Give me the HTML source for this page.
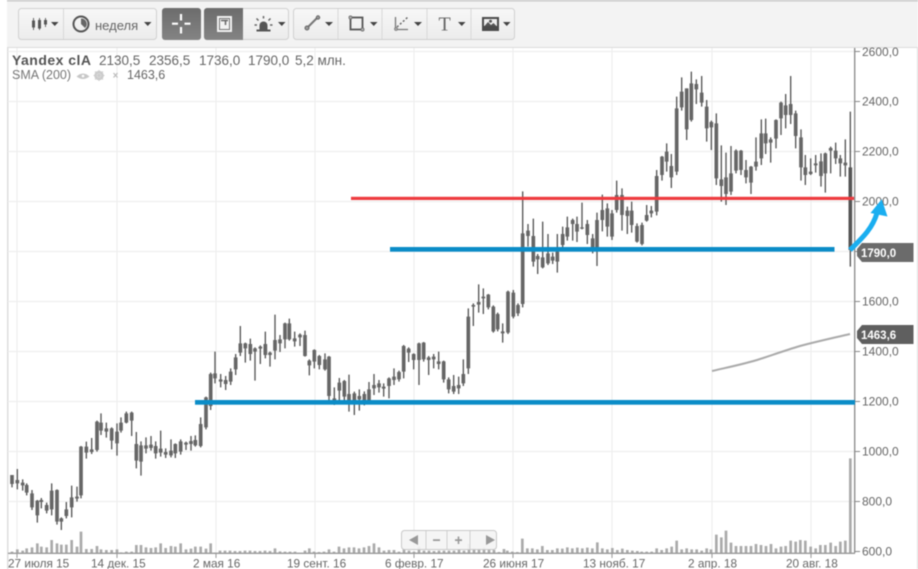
<!DOCTYPE html>
<html>
<head>
<meta charset="utf-8">
<style>
html,body{margin:0;padding:0;background:#fff;width:918px;height:569px;overflow:hidden}
svg{display:block;filter:blur(.45px)}
text{font-family:"Liberation Sans",Arial,sans-serif}
</style>
</head>
<body>
<svg width="918" height="569" viewBox="0 0 918 569" xmlns="http://www.w3.org/2000/svg">
<defs>
<linearGradient id="lg" x1="0" y1="0" x2="0" y2="1"><stop offset="0" stop-color="#f7f7f7"/><stop offset="1" stop-color="#ececec"/></linearGradient>
<linearGradient id="dg" x1="0" y1="0" x2="0" y2="1"><stop offset="0" stop-color="#6c6c6c"/><stop offset="1" stop-color="#848484"/></linearGradient>
</defs>
<rect width="918" height="569" fill="#fff"/>
<!-- toolbar -->
<rect x="7" y="0" width="911" height="47" fill="#f3f3f3"/>
<rect x="7" y="0" width="911" height="1.5" fill="#c8c8c8"/>
<rect x="7" y="47" width="911" height="1" fill="#dcdcdc"/>
<rect x="7" y="47" width="1.5" height="522" fill="#dedede"/>
<rect x="917" y="47" width="1" height="522" fill="#dcdcdc"/>

<rect x="18.5" y="8.5" width="138" height="31" rx="3" fill="url(#lg)" stroke="#d0d0d0"/>
<rect x="63" y="9" width="1" height="30" fill="#d8d8d8"/>
<rect x="162" y="8" width="39" height="32" rx="3" fill="url(#dg)"/>
<rect x="204.500" y="8.500" width="84" height="31" rx="3" fill="url(#lg)" stroke="#d0d0d0"/>
<path d="M207 8H243V40H207a3 3 0 0 1-3-3V11a3 3 0 0 1 3-3z" fill="url(#dg)"/>
<rect x="293.500" y="8.500" width="221" height="31" rx="3" fill="url(#lg)" stroke="#d0d0d0"/>
<path d="M338 9V39M382 9V39M427 9V39M471 9V39" stroke="#d8d8d8" stroke-width="1"/>

<!-- candle icon -->
<path d="M33.500 18V30M39.500 18V30M45.500 18V27" stroke="#666" stroke-width="1"/>
<path d="M33.500 20.500V27.500M39.500 20V28.500M45.500 20V24.500" stroke="#555" stroke-width="3"/>
<!-- carets -->
<path d="M51 22H58.500L54.750 26zM144 22H151.500L147.750 26zM278 22H285.500L281.750 26zM325 22H333L329 26zM370 22H377.500L373.750 26zM414 22H422L418 26zM458 22H465.500L461.750 26zM503 22H510.500L506.750 26z" fill="#444"/>
<!-- clock -->
<circle cx="81" cy="24" r="7.500" fill="none" stroke="#555" stroke-width="2"/>
<path d="M81 24V18.500A5.500 5.500 0 0 1 85 28z" fill="#666"/>
<text x="95" y="30" font-size="13" fill="#666">неделя</text>
<!-- crosshair -->
<path d="M181 14V20.500M181 27V33.500M172 23.700H178M184.500 23.700H190.500" stroke="#fff" stroke-width="2.200"/>
<!-- book icon -->
<rect x="217" y="16" width="15" height="16" fill="#f2f2f2"/>
<rect x="219.500" y="18.500" width="10" height="11" fill="none" stroke="#777" stroke-width="1"/>
<path d="M221 20.500H228M225.500 20.500V25" stroke="#666" stroke-width="1.500"/>
<!-- alarm icon -->
<path d="M259.500 30V25.500A4 4 0 0 1 267.500 25.500V30z" fill="#555"/>
<rect x="256.500" y="29.500" width="14" height="2" fill="#555"/>
<path d="M263.500 16V18.500M256.500 18.500L258.500 20.500M270.500 18.500L268.500 20.500M254.500 25H257M270 25H272.500" stroke="#666" stroke-width="1.500"/>
<!-- line tool -->
<path d="M307.500 27.500L317.500 17.500" stroke="#777" stroke-width="2"/>
<circle cx="307" cy="28" r="2" fill="#999" stroke="#666"/>
<circle cx="318" cy="17.500" r="1.700" fill="#999" stroke="#666"/>
<!-- rect tool -->
<rect x="350.500" y="17.500" width="12" height="12" fill="none" stroke="#555" stroke-width="1.800"/>
<circle cx="350.500" cy="17.500" r="1.600" fill="#aaa" stroke="#666" stroke-width=".7"/>
<circle cx="362.500" cy="29.500" r="1.600" fill="#aaa" stroke="#666" stroke-width=".7"/>
<!-- fib tool -->
<path d="M395.500 17V29.500H408" fill="none" stroke="#777" stroke-width="1.300"/>
<path d="M397 27L408 17" stroke="#666" stroke-width="1.500" stroke-dasharray="2 2"/>
<circle cx="396" cy="29" r="1.500" fill="#aaa" stroke="#777" stroke-width=".7"/>
<!-- T -->
<text x="438.500" y="30.500" font-size="20" fill="#666" style="font-family:'Liberation Serif',serif">T</text>
<!-- image tool -->
<rect x="482" y="17" width="17" height="14" fill="#4a4a4a"/>
<rect x="484" y="19" width="13" height="7" fill="#eee"/>
<path d="M484.500 26L488 22L491 25L493.500 23L496.500 26z" fill="#555"/>
<circle cx="490.500" cy="21.300" r="1.500" fill="#555"/>

<!-- grid -->
<path d="M8 51.500H855M8 101.500H855M8 151.500H855M8 201.500H855M8 251.500H855M8 301.500H855M8 351.500H855M8 401.500H855M8 451.500H855M8 501.500H855" stroke="#efefef" stroke-width="1.200"/>
<path d="M17 48V553M117 48V553M216 48V553M315 48V553M414 48V553M513 48V553M612 48V553M712 48V553M811 48V553" stroke="#eeeeee" stroke-width="1.200"/>

<!-- volume -->
<g transform="translate(0,400) scale(.33333)" stroke="#aaa" stroke-width="8" fill="none">
<path d="M36 460V455M52 460V448M68 460V452M80 460V445M96 460V442M112 460V430M124 460V440M140 460V442M155 460V420M171 460V430M184 460V434M199 460V434M215 460V420M231 460V440M243 460V395M259 460V447M275 460V447M291 460V438M303 460V448M319 460V450M335 460V450M351 460V448M363 460V457M379 460V455M395 460V455M409 460V435M423 460V435M438 460V442M453 460V444M467 460V442M482 460V430M497 460V444M513 460V438M526 460V440M542 460V430M558 460V448M573 460V446M586 460V440M602 460V440M618 460V446M632 460V430M645 460V458M660 460V452M675 460V452M690 460V452M705 460V453M720 460V453M735 460V452M750 460V452M765 460V453M780 460V453M795 460V452M810 460V453M825 460V445M840 460V454M855 460V455M870 460V455M885 460V455"/>
</g>
<g transform="translate(300,400) scale(.33333)" stroke="#aaa" stroke-width="8" fill="none">
<path d="M15 460V452M28 460V445M42 460V455M57 460V456M72 460V455M87 460V448M102 460V455M117 460V440M132 460V445M147 460V442M162 460V442M177 460V445M192 460V442M207 460V438M222 460V430M237 460V442M252 460V452M267 460V450M282 460V450M297 460V455M312 460V448M327 460V452M342 460V455M357 460V440M372 460V452M387 460V452M402 460V453M417 460V452M432 460V452M447 460V452M462 460V452M477 460V450M492 460V452M507 460V432M522 460V445M537 460V446M552 460V443M567 460V450M582 460V450M597 460V456M612 460V447M622 460V452M637 460V455M652 460V456M667 460V416M682 460V445M697 460V445M712 460V448M727 460V438M742 460V450M757 460V450M772 460V445M787 460V446M802 460V442M817 460V445M832 460V443M847 460V445M862 460V443M877 460V445M892 460V427M907 460V445M922 460V448M937 460V444M952 460V450M967 460V446M982 460V450M997 460V452M1012 460V453"/>
</g>
<g transform="translate(640,300) scale(.33333)" stroke="#aaa" stroke-width="8" fill="none">
<path d="M5 760V755M20 760V755M35 760V755M50 760V745M65 760V750M80 760V745M95 760V740M110 760V722M125 760V748M140 760V745M155 760V748M170 760V748M185 760V752M200 760V745M213 760V748M229 760V704M244 760V712M258 760V692M273 760V728M288 760V738M303 760V738M318 760V738M333 760V738M348 760V732M363 760V735M378 760V738M393 760V732M408 760V745M423 760V740M437 760V738M452 760V722M467 760V725M481 760V720M496 760V722M512 760V740M527 760V745M541 760V735M556 760V735M572 760V728M587 760V738M601 760V725M616 760V722M631 760V475"/>
</g>

<!-- candles: first section -->
<g transform="translate(0,300) scale(.33333)" fill="none">
<path stroke="#555" stroke-width="4" d="M36 525V562M52 507V568M68 538V572M80 550V586M96 570V630M112 600V668M124 594V625M140 608V640M155 550V646M171 568V674M184 652V690M199 606V655M215 557V652M231 560V605M243 438V595M259 425V476M275 414V462M291 362V455M303 340V405M319 368V413M335 382V448M351 370V467M363 352V398M379 335V370M395 335V408M409 396V505M423 424V527M438 412V460M453 408V452M467 424V476M482 392V470M497 445V474M513 418V472M526 430V474M542 418V464M558 425V450M573 408V452M586 406V440M602 352V442M618 290V388M632 218V330M645 155V250"/>
<path stroke="#666" stroke-width="11" d="M36 525V552M52 540V550M68 548V556M80 555V578M96 580V622M112 602V646M124 600V606M140 615V632M155 572V628M171 570V665M184 655V665M199 628V648M215 592V622M231 590V596M243 440V586M259 440V458M275 448V456M291 365V450M303 368V392M319 385V395M335 385V422M351 395V430M363 368V392M379 340V368M395 338V362M409 432V482M423 436V485M438 436V446M453 434V444M467 438V460M482 446V458M497 456V464M513 452V466M526 432V460M542 424V455M558 428V434M573 423V432M586 420V436M602 372V438M618 292V382M632 222V318M645 220V235"/>
</g>
<g transform="translate(220,300) scale(.33333)" fill="none">
<path stroke="#555" stroke-width="4" d="M2 222V262M17 228V270M32 205V255M47 162V225M61 78V168M76 128V188M91 116V182M105 142V242M121 136V192M136 95V175M150 155V200M165 44V178M180 105V156M195 68V145M208 56V122M224 95V140M240 100V138M255 92V170M268 178V226M283 148V205M298 165V208M315 160V212M327 168V300M343 262V315M358 234V302M373 240V305M387 224V335M403 275V345M418 268V332M433 274V316M447 246V312M462 222V285M477 240V278M491 250V290M507 232V295M522 205V255M537 212V245M551 135V235M566 142V186M581 160V208M597 128V255M611 126V185M626 168V225M641 162V205M656 155V208M671 182V248M686 232V280M701 225V282M716 230V282M730 178V258"/>
<path stroke="#666" stroke-width="11" d="M2 238V245M17 240V252M32 215V245M47 172V208M61 130V158M76 130V145M91 132V162M105 145V155M121 140V146M136 132V165M150 158V165M165 120V152M180 118V130M195 70V118M208 70V118M224 115V124M240 104V112M255 105V168M268 182V196M283 150V185M298 168V195M315 178V208M327 170V288M343 295V300M358 248V272M373 243V290M387 282V300M403 280V300M418 288V298M433 282V300M447 268V300M462 255V265M477 250V262M491 260V266M507 235V258M522 230V240M537 216V238M551 138V215M566 146V158M581 162V180M597 130V180M611 128V178M626 172V180M641 170V178M656 184V192M671 184V238M686 238V268M701 258V275M716 255V265M730 222V250"/>
</g>
<g transform="translate(450,170) scale(.33333)" fill="none">
<path stroke="#555" stroke-width="4" d="M55 415V612M70 400V468M86 343V428M100 355V432M115 372V418M130 406V488M143 428V484M158 460V518M174 362V492M190 360V445M204 400V438M218 64V412M234 162V230M250 146V290M263 252V312M278 155V295M294 192V285M308 248V282M322 192V308M338 170V232M352 140V212M368 146V212M381 140V216M396 98V178M412 150V222M428 192V250M441 128V288M457 74V184M472 100V200M486 120V210M500 32V128M516 55V182M532 110V192M545 95V188M561 160V218M576 158V226M590 105V155M604 108V142M620 0V136"/>
<path stroke="#666" stroke-width="11" d="M55 440V595M70 405V410M86 396V404M100 380V385M115 374V412M130 410V484M143 432V478M158 484V490M174 365V488M190 368V440M204 405V430M218 190V402M234 182V198M250 198V275M263 258V268M278 262V292M294 250V280M308 260V272M322 245V275M338 192V225M352 172V200M368 150V162M381 162V185M396 172V176M412 162V195M428 205V240M441 150V240M457 120V150M472 115V170M486 130V200M500 75V120M516 75V135M532 122V138M545 122V165M561 168V215M576 165V222M590 135V152M604 122V130M620 18V125"/>
</g>
<g transform="translate(640,60) scale(.33333)" fill="none">
<path stroke="#555" stroke-width="4" d="M66 288V362M80 250V335M94 282V384M110 110V345M125 52V152M140 85V240M154 35V185M169 58V132M185 48V140M200 120V245M214 182V270M229 160V375M244 256V425M258 278V435M273 258V405M288 268V340M303 270V345M318 300V370M333 318V402M348 232V332M364 178V315M377 176V282M392 232V308M408 178V265M423 125V225M437 102V205M452 48V192M467 152V265M483 208V362M496 285V375M512 295V345M527 285V338M543 280V380M556 278V398M572 260V340M587 248V312M601 285V350M616 238V350M631 155V620"/>
<path stroke="#666" stroke-width="11" d="M66 290V345M80 275V305M94 318V352M110 145V335M125 95V142M140 85V208M154 70V180M169 72V88M185 98V128M200 140V205M214 186V202M229 190V355M244 358V378M258 352V402M273 340V395M288 272V332M303 272V330M318 330V352M333 320V368M348 305V320M364 220V295M377 220V250M392 238V248M408 180V236M423 128V175M437 136V165M452 132V165M467 160V228M483 232V322M496 322V345M512 335V342M527 310V316M543 304V348M556 280V340M572 264V272M587 272V295M601 295V310M616 308V316"/>
<path stroke="#555" stroke-width="11" d="M631 322V570"/>
</g>

<!-- SMA -->
<path d="M712 371C727 367.500 742 364.500 757 360C771 355.500 785 350.500 800 346C817 341.500 833 338 850 334" fill="none" stroke="#aaa" stroke-width="2"/>

<!-- axes -->
<path d="M854.700 48V553" stroke="#888" stroke-width="1.300"/>
<path d="M8 553.300H855" stroke="#999" stroke-width="1.300"/>
<path d="M855 51.500H860M855 101.500H860M855 151.500H860M855 201.500H860M855 251.500H860M855 301.500H860M855 351.500H860M855 401.500H860M855 451.500H860M855 501.500H860M855 551.500H860" stroke="#888" stroke-width="1"/>
<path d="M17 553V558M117 553V558M216 553V558M315 553V558M414 553V558M513 553V558M612 553V558M712 553V558M811 553V558" stroke="#999" stroke-width="1"/>

<g font-size="12" fill="#666">
<text x="862" y="56">2600,0</text>
<text x="862" y="105.500">2400,0</text>
<text x="862" y="155.500">2200,0</text>
<text x="862" y="205.500">2000,0</text>
<text x="862" y="305.500">1600,0</text>
<text x="862" y="355.500">1400,0</text>
<text x="862" y="405.500">1200,0</text>
<text x="862" y="455.500">1000,0</text>
<text x="862" y="505.500">800,0</text>
<text x="862" y="555.500">600,0</text>
</g>
<g font-size="11.800" fill="#666">
<text x="8" y="567.500">27 июля 15</text>
<text x="91" y="567.500">14 дек. 15</text>
<text x="193" y="567.500">2 мая 16</text>
<text x="287" y="567.500">19 сент. 16</text>
<text x="385" y="567.500">6 февр. 17</text>
<text x="483" y="567.500">26 июня 17</text>
<text x="583" y="567.500">13 нояб. 17</text>
<text x="688" y="567.500">2 апр. 18</text>
<text x="786" y="567.500">20 авг. 18</text>
</g>

<!-- legend -->
<text x="12" y="65" font-size="14" font-weight="bold" fill="#555" textLength="79">Yandex clA</text>
<g font-size="13.500" fill="#666">
<text x="99" y="65">2130,5</text>
<text x="149" y="65">2356,5</text>
<text x="199" y="65">1736,0</text>
<text x="248" y="65">1790,0</text>
<text x="295" y="65">5,2 млн.</text>
</g>
<text x="12" y="79" font-size="12.500" fill="#777">SMA (200)</text>
<text x="127" y="79" font-size="12.500" fill="#666">1463,6</text>
<path d="M76.500 76.500Q83 70.500 89.500 76.500Q83 81.500 76.500 76.500z" fill="#c8c8c8"/>
<circle cx="83" cy="76" r="1.300" fill="#fff"/>
<circle cx="99" cy="75.500" r="3.500" fill="none" stroke="#ccc" stroke-width="2.500"/>
<path d="M99 70V81M93.500 75.500H104.500M95 71.500L103 79.500M103 71.500L95 79.500" stroke="#ccc" stroke-width="1"/>
<path d="M113.500 73L117.500 77.500M117.500 73L113.500 77.500" stroke="#bbb" stroke-width="1.200"/>

<!-- annotation lines -->
<rect x="351" y="196.800" width="503" height="3.200" fill="#ee3b3f"/>
<rect x="390" y="247" width="444.500" height="4.700" fill="#0b8cc7"/>
<rect x="195" y="400" width="660" height="4.700" fill="#0b8cc7"/>

<!-- price tags -->
<path d="M862 243H913.500V262H862L857 256V249z" fill="#6b6b6b"/>
<text x="861" y="257" font-size="11.500" font-weight="bold" fill="#fff">1790,0</text>
<path d="M862 325H913.500V344H862L857 338V331z" fill="#5f5f5f"/>
<text x="861" y="339" font-size="11.500" font-weight="bold" fill="#fff">1463,6</text>

<!-- arrow -->
<path d="M850 250C860 240 872 230 877 213" fill="none" stroke="#1aaef0" stroke-width="5"/>
<path d="M881.700 199.300L870.500 213L887.500 216.500z" fill="#1aaef0"/>

<!-- nav -->
<rect x="401.500" y="530.500" width="95" height="19" rx="3" fill="#f4f4f4" fill-opacity=".92" stroke="#c8c8c8"/>
<path d="M426 531V549M447 531V549M470 531V549" stroke="#d0d0d0" stroke-width="1"/>
<path d="M409 540L418 535V545zM486 535L495 540L486 545zM433 539.300H440V541H433zM455 539.300H462V541H455zM457.700 536.500H459.300V544H457.700z" fill="#999"/>
</svg>
</body>
</html>
